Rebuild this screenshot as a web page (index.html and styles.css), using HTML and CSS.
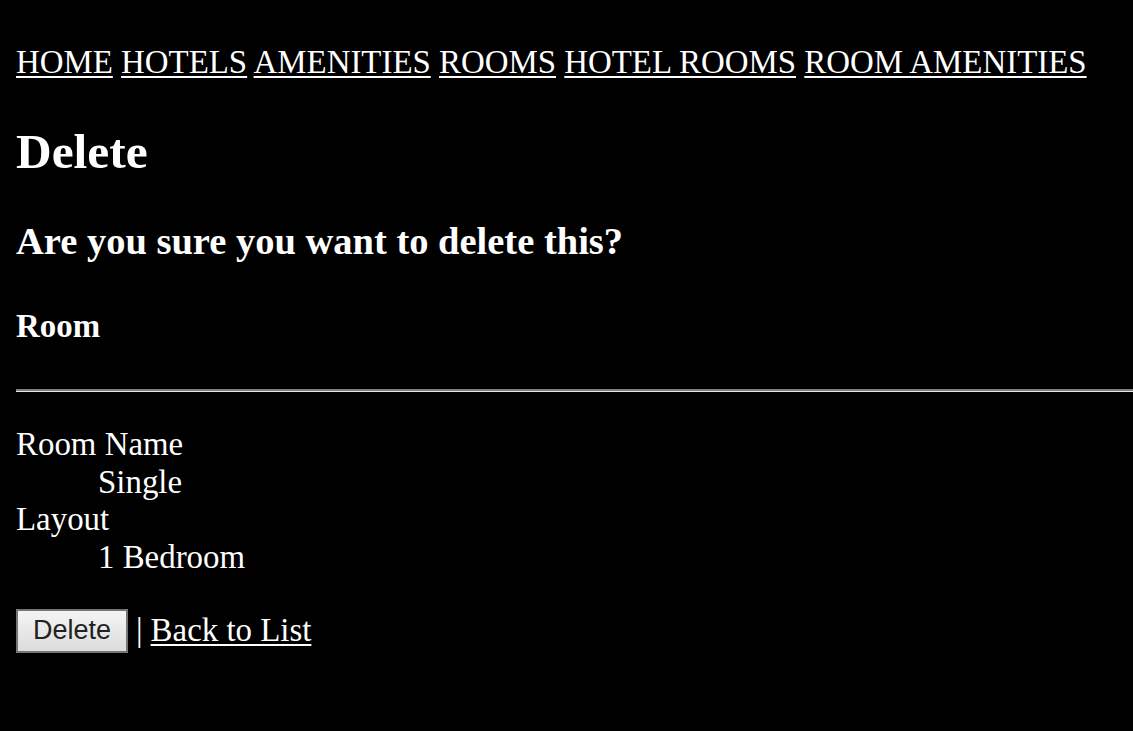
FILE: index.html
```html
<!DOCTYPE html>
<html>
<head>
<meta charset="utf-8">
<title>Delete</title>
<link rel="stylesheet" href="styles.css">
</head>
<body>
<div class="page">
<nav class="nav">
  <a href="#">HOME</a> <a href="#">HOTELS</a> <a href="#">AMENITIES</a> <a href="#">ROOMS</a> <a href="#">HOTEL ROOMS</a> <a href="#">ROOM AMENITIES</a>
</nav>
<main class="content">
  <h1 class="title">Delete</h1>
  <h3 class="question">Are you sure you want to delete this?</h3>
  <div>
    <h4 class="entity">Room</h4>
    <div class="rule" role="separator"></div>
    <dl class="details">
      <dt>Room Name</dt>
      <dd>Single</dd>
      <dt>Layout</dt>
      <dd>1 Bedroom</dd>
    </dl>
    <form class="actions">
      <button type="button" class="btn">Delete</button> | <a href="#">Back to List</a>
    </form>
  </div>
</main>
</div>
</body>
</html>
```
FILE: styles.css
```css
html {
  background: #000;
}
body {
  margin: 0;
  color: #fff;
  font-family: "Liberation Serif", "Times New Roman", serif;
  font-size: 32.9px;
  line-height: normal;
}
.page {
  padding: 16px 0 16px 16px;
}
a {
  color: #fff;
  text-decoration: underline;
  text-decoration-thickness: 2px;
  text-underline-offset: 3px;
}
.nav {
  margin: 28px 0 0;
}
.title {
  font-size: 49.4px;
  font-weight: bold;
  margin: 42px 0 39px;
}
.question {
  font-size: 38.5px;
  margin: 0 0 45px;
}
.entity {
  font-size: 32.9px;
  margin: 0 0 44px;
}
.rule {
  margin: 0 0 34px;
  height: 0;
  border-top: 2px solid #808080;
  border-bottom: 1px solid #e6e6e6;
}
.details {
  margin: 0 0 32px;
  line-height: 37.7px;
}
.details dt {
  margin: 0;
}
.details dd {
  margin: 0 0 0 82px;
}
.actions {
  margin: 0;
  display: flex;
  align-items: center;
}
.btn {
  font-family: Arial, "Liberation Sans", sans-serif;
  font-size: 27px;
  color: #222;
  padding: 2px 14px;
  height: 44px;
  width: 112px;
  margin-right: 8px;
  border: 2px solid #767676;
  border-radius: 0;
  background: linear-gradient(#f4f4f4, #dcdcdc);
}
.actions a {
  margin-left: 8px;
}
```
